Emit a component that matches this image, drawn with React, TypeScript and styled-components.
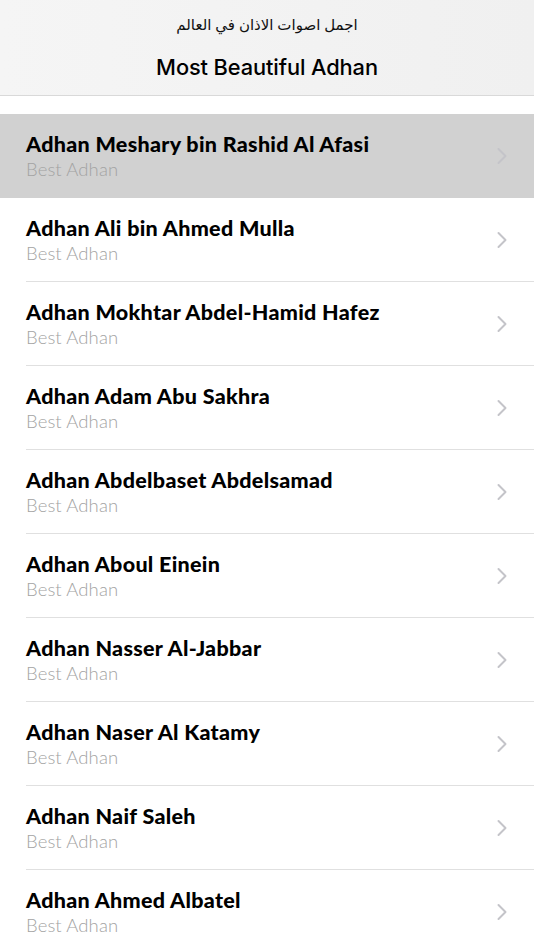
import React from 'react';
import styled, { createGlobalStyle } from 'styled-components';

const GlobalStyle = createGlobalStyle`
  html, body {
    margin: 0;
    padding: 0;
    background: #ffffff;
  }
  body {
    font-family: 'Lato', 'Noto Sans', sans-serif;
  }
`;

const reciters = [
  'Adhan Meshary bin Rashid Al Afasi',
  'Adhan Ali bin Ahmed Mulla',
  'Adhan Mokhtar Abdel-Hamid Hafez',
  'Adhan Adam Abu Sakhra',
  'Adhan Abdelbaset Abdelsamad',
  'Adhan Aboul Einein',
  'Adhan Nasser Al-Jabbar',
  'Adhan Naser Al Katamy',
  'Adhan Naif Saleh',
  'Adhan Ahmed Albatel',
];

const Page = styled.div`
  width: 534px;
  height: 950px;
  overflow: hidden;
  background: #ffffff;
`;

const Header = styled.header`
  height: 95px;
  display: flex;
  flex-direction: column;
  align-items: center;
  background: linear-gradient(90deg, #f5f5f5 0%, #f3f3f3 40%, #f0f0f0 100%);
  border-bottom: 1px solid #d9d9d9;
`;

const ArabicTitle = styled.div`
  margin-top: 13px;
  height: 22px;
  font-family: 'Noto Sans', 'DejaVu Sans', sans-serif;
  font-size: 15px;
  line-height: 22px;
  color: #111111;
  direction: rtl;
`;

const Title = styled.h1`
  margin: 18px 0 0;
  font-family: 'Inter', 'Liberation Sans', sans-serif;
  font-size: 21.8px;
  font-weight: 500;
  line-height: 28px;
  color: #000000;
  letter-spacing: -0.1px;
`;

const List = styled.ul`
  list-style: none;
  margin: 18px 0 0;
  padding: 0;
`;

const Row = styled.li<{ $selected?: boolean }>`
  height: 84px;
  display: flex;
  align-items: center;
  padding-left: 26px;
  background: ${(p) => (p.$selected ? '#d1d1d1' : '#ffffff')};
`;

const RowBody = styled.div<{ $last?: boolean }>`
  flex: 1;
  height: 100%;
  display: flex;
  align-items: center;
  padding-right: 26px;
  box-sizing: border-box;
  border-bottom: ${(p) => (p.$last ? 'none' : '1px solid #e0e0e0')};
`;

const Texts = styled.div`
  flex: 1;
  display: flex;
  flex-direction: column;
  padding-top: 1px;
`;

const Name = styled.div`
  font-size: 21.5px;
  font-weight: 900;
  line-height: 26px;
  letter-spacing: 0.3px;
  color: #000000;
`;

const Sub = styled.div`
  font-size: 18.5px;
  font-weight: 300;
  line-height: 25px;
  letter-spacing: 0.1px;
  color: #a3a3a3;
`;

const Chevron = () => (
  <svg width="12" height="18" viewBox="0 0 12 18" fill="none">
    <path d="M2.5 2 L9.5 9 L2.5 16" stroke="#c4c4c9" strokeWidth="2" strokeLinecap="round" strokeLinejoin="round" />
  </svg>
);

const App: React.FC = () => (
  <Page>
    <GlobalStyle />
    <Header>
      <ArabicTitle>اجمل اصوات الاذان في العالم</ArabicTitle>
      <Title>Most Beautiful Adhan</Title>
    </Header>
    <List>
      {reciters.map((name, i) => (
        <Row key={name} $selected={i === 0}>
          <RowBody $last={i === 0 || i === reciters.length - 1}>
            <Texts>
              <Name>{name}</Name>
              <Sub>Best Adhan</Sub>
            </Texts>
            <Chevron />
          </RowBody>
        </Row>
      ))}
    </List>
  </Page>
);

export default App;
